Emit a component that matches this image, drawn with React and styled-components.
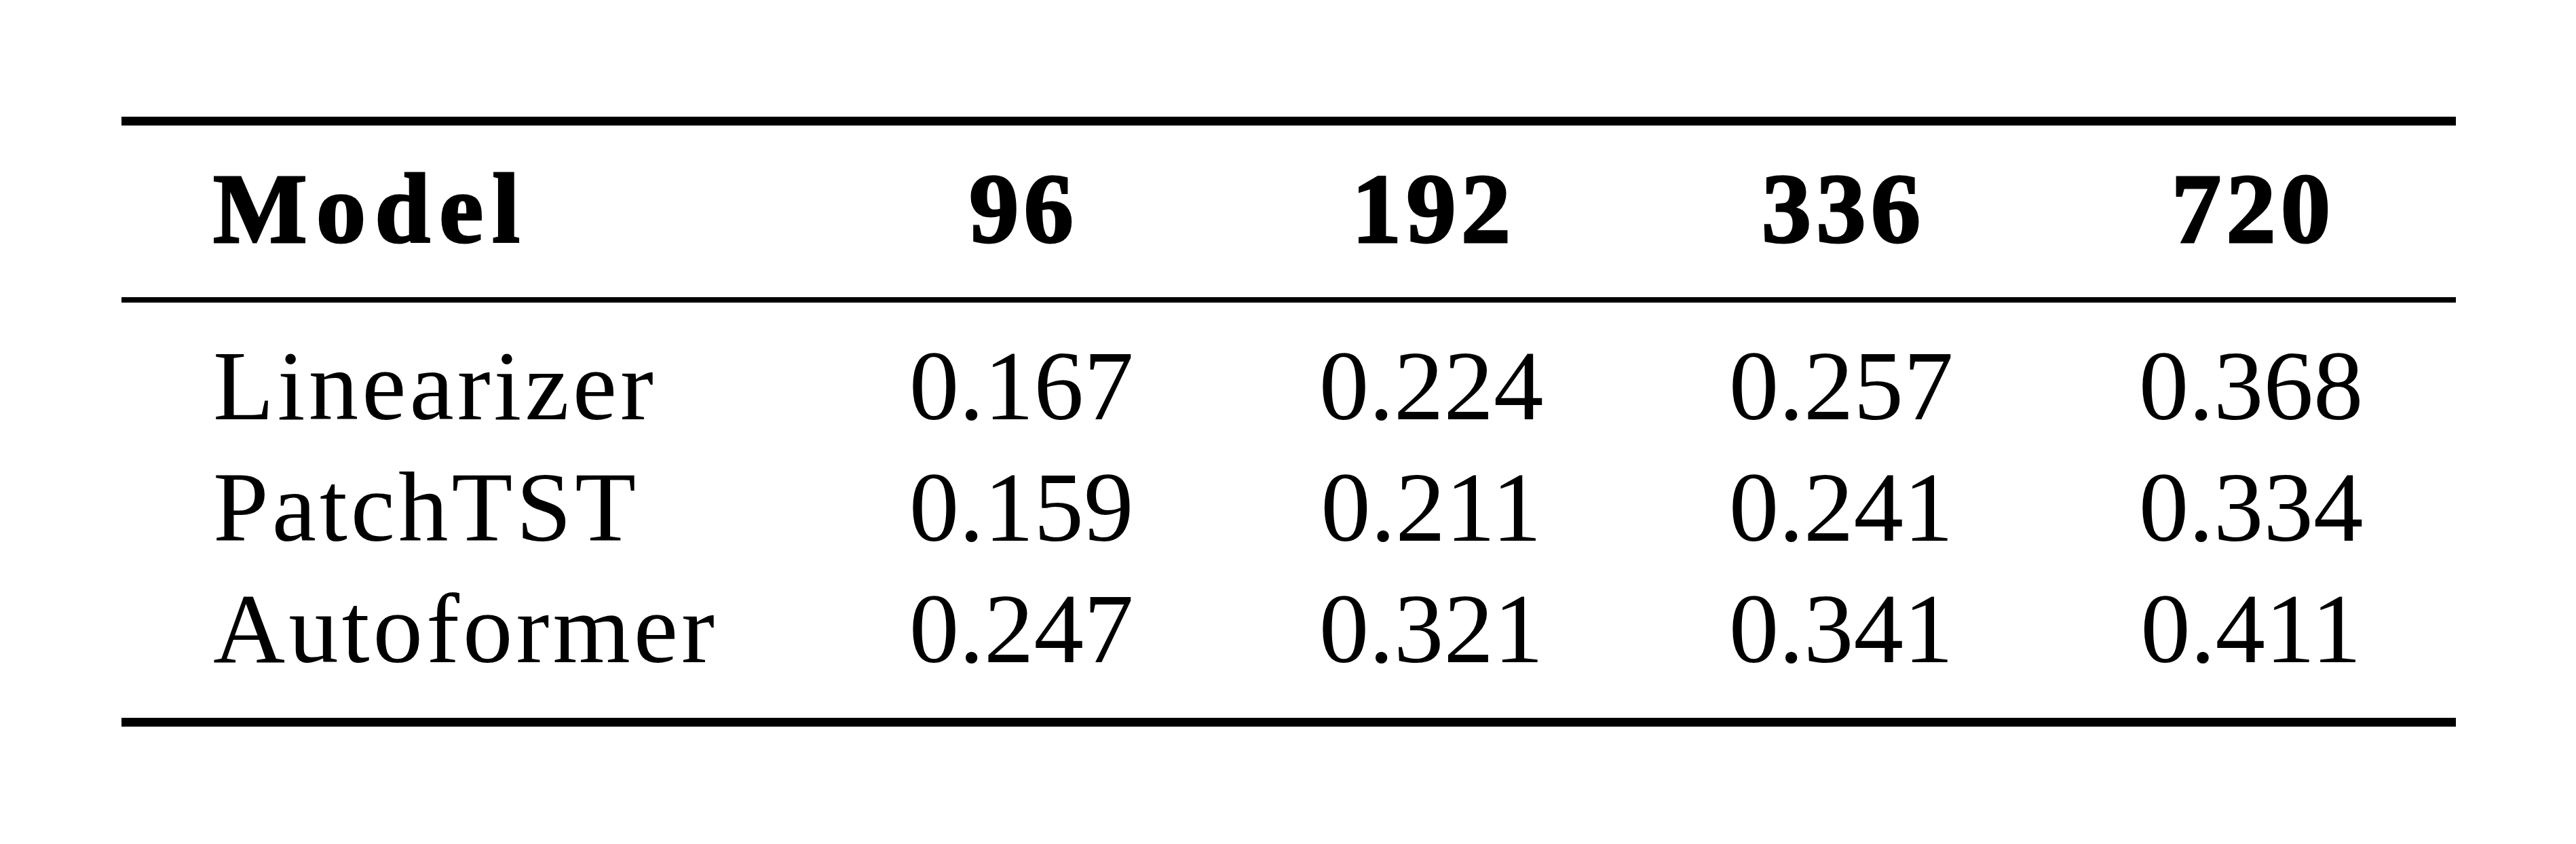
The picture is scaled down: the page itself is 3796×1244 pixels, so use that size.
import React from "react";
import styled, { createGlobalStyle } from "styled-components";

/* -------------------------
   Data
   ------------------------- */
const horizons = ["96", "192", "336", "720"];

const results = [
  { model: "Linearizer", values: ["0.167", "0.224", "0.257", "0.368"] },
  { model: "PatchTST", values: ["0.159", "0.211", "0.241", "0.334"] },
  { model: "Autoformer", values: ["0.247", "0.321", "0.341", "0.411"] },
];

/* -------------------------
   Component
   ------------------------- */
const App = () => {
  return (
    <>
      <GlobalStyle />
      <Page>
        <Table>
          <Rule $thick={13} />

          <Section $top={33} $bottom={41}>
            <Row>
              <Cell $bold $spacing={13}>Model</Cell>
              {horizons.map((h) => (
                <Cell key={h} $bold $center $spacing={7}>
                  {h}
                </Cell>
              ))}
            </Row>
          </Section>

          <Rule $thick={8} />

          <Section $top={33} $bottom={42}>
            {results.map((r) => (
              <Row key={r.model}>
                <Cell $spacing={5}>{r.model}</Cell>
                {r.values.map((v, i) => (
                  <Cell key={i} $center>
                    {v}
                  </Cell>
                ))}
              </Row>
            ))}
          </Section>

          <Rule $thick={13} />
        </Table>
      </Page>
    </>
  );
};

/* -------------------------
   Styles
   ------------------------- */
const GlobalStyle = createGlobalStyle`
  html, body {
    margin: 0;
    padding: 0;
    background: #ffffff;
  }
`;

const Page = styled.div`
  width: 3796px;
  height: 1244px;
  background: #ffffff;
  padding: 172px 0 0 179px;
  box-sizing: border-box;
  font-family: "Liberation Serif", "Times New Roman", serif;
  color: #000000;
`;

const Table = styled.div`
  width: 3440px;
  display: flex;
  flex-direction: column;
`;

const Rule = styled.div`
  height: ${({ $thick }) => $thick}px;
  background: #000000;
`;

const Section = styled.div`
  padding: ${({ $top }) => $top}px 0 ${({ $bottom }) => $bottom}px;
`;

const Row = styled.div`
  display: grid;
  grid-template-columns: 1024px repeat(4, 1fr);
  height: 179px;
  font-size: 147px;
  line-height: 179px;
`;

const Cell = styled.div`
  white-space: nowrap;
  font-weight: ${({ $bold }) => ($bold ? 700 : 400)};
  -webkit-text-stroke: ${({ $bold }) => ($bold ? "3px #000" : "0")};
  letter-spacing: ${({ $spacing }) => $spacing || 0}px;
  text-align: ${({ $center }) => ($center ? "center" : "left")};
  padding-left: ${({ $center, $spacing }) =>
    $center ? $spacing || 0 : 135}px;
`;

export default App;
